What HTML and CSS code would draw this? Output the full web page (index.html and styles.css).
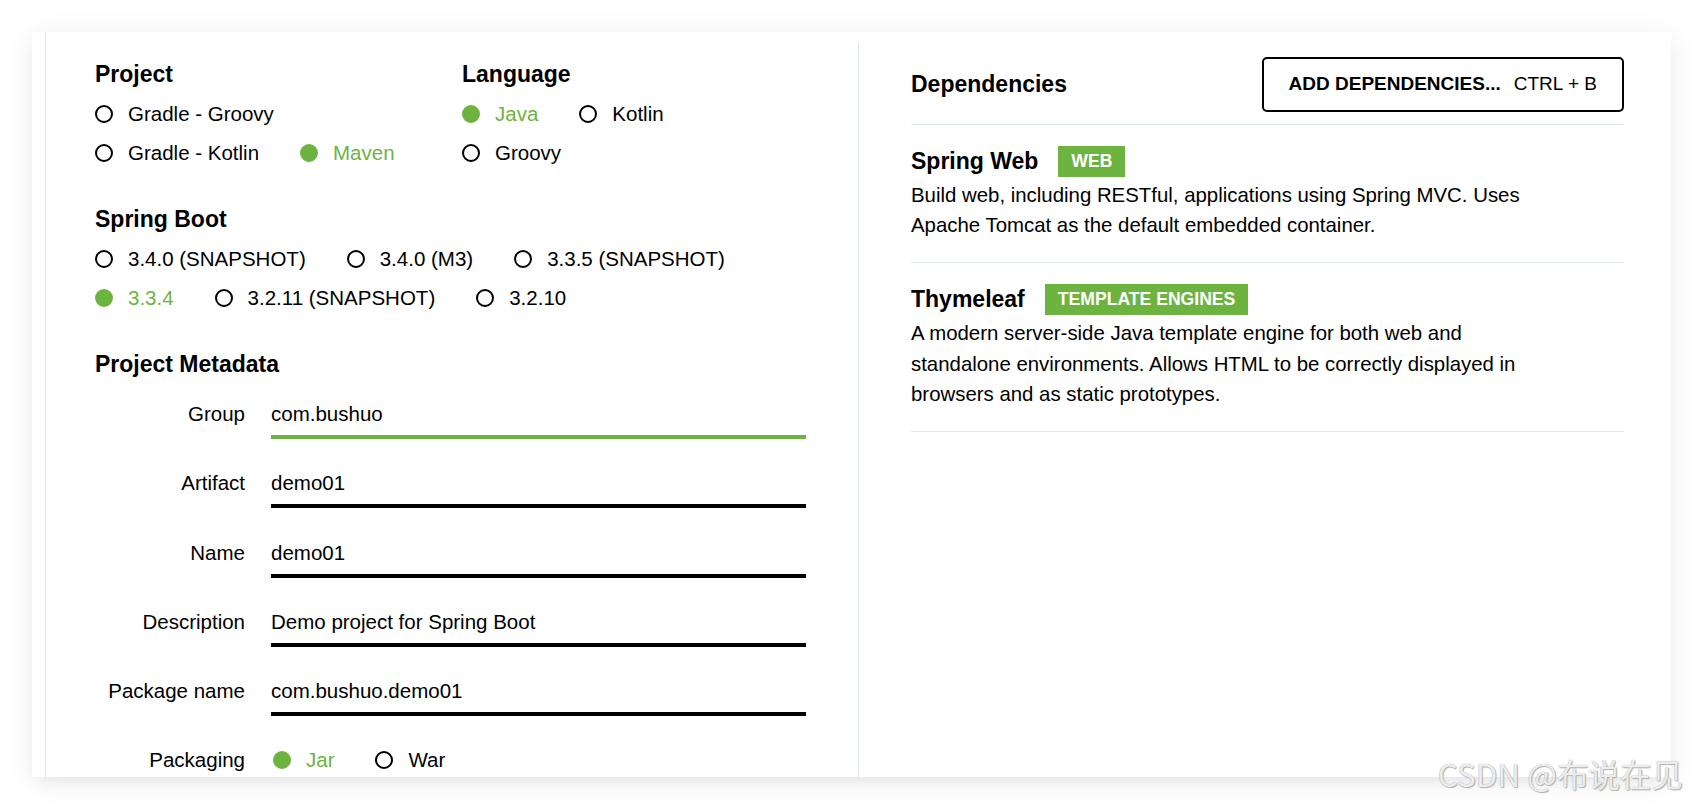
FILE: index.html
```html
<!DOCTYPE html>
<html lang="en">
<head>
  <meta charset="UTF-8" />
  <meta name="viewport" content="width=device-width, initial-scale=1.0"/>
  <title>Spring Initializr</title>
  <link rel="stylesheet" href="styles.css">
</head>
<body>
  <div class="page">
    <div class="card">
      <div class="card-body">

        <div class="col-left">
          <div class="choices">
            <section class="group">
              <h2 class="group-title">Project</h2>
              <div class="radio-row">
                <label class="radio"><span class="dot"></span>Gradle - Groovy</label>
              </div>
              <div class="radio-row">
                <label class="radio"><span class="dot"></span>Gradle - Kotlin</label>
                <label class="radio checked"><span class="dot"></span>Maven</label>
              </div>
            </section>
            <section class="group">
              <h2 class="group-title">Language</h2>
              <div class="radio-row">
                <label class="radio checked"><span class="dot"></span>Java</label>
                <label class="radio"><span class="dot"></span>Kotlin</label>
              </div>
              <div class="radio-row">
                <label class="radio"><span class="dot"></span>Groovy</label>
              </div>
            </section>
          </div>

          <section class="group">
            <h2 class="group-title">Spring Boot</h2>
            <div class="radio-row">
              <label class="radio"><span class="dot"></span>3.4.0 (SNAPSHOT)</label>
              <label class="radio"><span class="dot"></span>3.4.0 (M3)</label>
              <label class="radio"><span class="dot"></span>3.3.5 (SNAPSHOT)</label>
            </div>
            <div class="radio-row">
              <label class="radio checked"><span class="dot"></span>3.3.4</label>
              <label class="radio"><span class="dot"></span>3.2.11 (SNAPSHOT)</label>
              <label class="radio"><span class="dot"></span>3.2.10</label>
            </div>
          </section>

          <section class="group metadata">
            <h2 class="group-title">Project Metadata</h2>
            <div class="field">
              <span class="field-label">Group</span>
              <span class="field-input focused">com.bushuo</span>
            </div>
            <div class="field">
              <span class="field-label">Artifact</span>
              <span class="field-input">demo01</span>
            </div>
            <div class="field">
              <span class="field-label">Name</span>
              <span class="field-input">demo01</span>
            </div>
            <div class="field">
              <span class="field-label">Description</span>
              <span class="field-input">Demo project for Spring Boot</span>
            </div>
            <div class="field">
              <span class="field-label">Package name</span>
              <span class="field-input">com.bushuo.demo01</span>
            </div>
            <div class="field">
              <span class="field-label">Packaging</span>
              <div class="radio-row packaging">
                <label class="radio checked"><span class="dot"></span>Jar</label>
                <label class="radio"><span class="dot"></span>War</label>
              </div>
            </div>
          </section>
        </div>

        <div class="col-right">
          <div class="deps-header">
            <h2 class="deps-title">Dependencies</h2>
            <button class="add-btn" type="button"><strong>ADD DEPENDENCIES...</strong><span>CTRL + B</span></button>
          </div>

          <div class="dep">
            <div class="dep-head">
              <span class="dep-name">Spring Web</span>
              <span class="badge">WEB</span>
            </div>
            <p class="dep-desc">Build web, including RESTful, applications using Spring MVC. Uses Apache Tomcat as the default embedded container.</p>
          </div>

          <div class="dep">
            <div class="dep-head">
              <span class="dep-name">Thymeleaf</span>
              <span class="badge">TEMPLATE ENGINES</span>
            </div>
            <p class="dep-desc">A modern server-side Java template engine for both web and standalone environments. Allows HTML to be correctly displayed in browsers and as static prototypes.</p>
          </div>
        </div>

      </div>
    </div>
    <div class="watermark">CSDN @布说在见</div>
  </div>
</body>
</html>
```

FILE: styles.css
```css
body {
  margin: 0;
  background: #fff;
  font-family: "Liberation Sans", Arial, sans-serif;
  color: #000;
}
.page {
  position: relative;
  padding: 32px;
  height: 810px;
  box-sizing: border-box;
  overflow: hidden;
}
.card {
  display: flex;
  height: 745px;
  overflow: hidden;
  background: #fff;
  padding-left: 13px;
  box-shadow: 0 4px 30px rgba(0,0,0,0.07), 0 8px 14px -6px rgba(0,0,0,0.08);
}
.card-body {
  display: flex;
  flex: 1;
  border-left: 1px solid #dfe7e9;
}

/* left side */
.col-left {
  width: 812px;
  flex-shrink: 0;
  padding: 28px 0 0 49px;
  box-sizing: border-box;
}
.choices {
  display: grid;
  grid-template-columns: 367px 1fr;
}
.group {
  display: flow-root;
  margin-bottom: 25px;
}
.group-title {
  margin: 0 0 14px;
  font-size: 23px;
  line-height: 28px;
  font-weight: bold;
}
.radio-row {
  display: flex;
  gap: 41px;
  height: 24px;
  margin-bottom: 15px;
}
.radio {
  display: inline-flex;
  align-items: center;
  font-size: 20.5px;
  line-height: 24px;
  white-space: nowrap;
}
.dot {
  width: 18px;
  height: 18px;
  box-sizing: border-box;
  border: 2px solid #000;
  border-radius: 50%;
  margin-right: 15px;
}
.radio.checked {
  color: #6db33f;
}
.radio.checked .dot {
  border-color: #6db33f;
  background: #6db33f;
}
.metadata .group-title {
  margin-bottom: 24px;
}
.field {
  display: flex;
  margin-bottom: 32.3px;
  font-size: 20.5px;
  line-height: 24px;
}
.field-label {
  width: 150px;
  margin-right: 26px;
  text-align: right;
  flex-shrink: 0;
}
.field-input {
  width: 535px;
  padding-bottom: 9px;
  border-bottom: 4px solid #000;
}
.field-input.focused {
  border-bottom-color: #6db33f;
}
.radio-row.packaging {
  padding-left: 2px;
}

/* right side */
.col-right {
  flex: 1;
  margin-top: 12px;
  border-left: 1px solid #dfe7e9;
  padding: 12.5px 47px 0 52px;
}
.deps-header {
  display: flex;
  align-items: center;
  justify-content: space-between;
  padding-bottom: 12px;
  border-bottom: 1px solid #dfe7e9;
}
.deps-title {
  margin: 0;
  font-size: 23px;
  font-weight: bold;
}
.add-btn {
  display: flex;
  align-items: center;
  gap: 13px;
  height: 55px;
  padding: 0 25px;
  background: #fff;
  border: 2px solid #000;
  border-radius: 5px;
  font-family: "Liberation Sans", Arial, sans-serif;
  font-size: 19px;
  color: #000;
  cursor: pointer;
}
.dep {
  padding: 21px 0;
  border-bottom: 1px solid #dfe7e9;
}
.dep-head {
  display: flex;
  align-items: center;
  gap: 20px;
}
.dep-name {
  font-size: 23px;
  font-weight: bold;
  line-height: 31px;
}
.badge {
  height: 31px;
  line-height: 31px;
  padding: 0 13px;
  background: #6db33f;
  color: #fff;
  font-size: 17.6px;
  font-weight: bold;
}
.dep-desc {
  margin: 3px 0 0;
  max-width: 650px;
  font-size: 20.4px;
  line-height: 30.7px;
}

.watermark {
  position: absolute;
  right: 20px;
  top: 758px;
  font-family: "Noto Sans CJK SC", sans-serif;
  font-size: 31.5px;
  line-height: 1;
  color: rgba(255,255,255,0.85);
  text-shadow: 0 0 1px #8a8a8a, 1px 1px 1px #b5b5b5;
}
```
